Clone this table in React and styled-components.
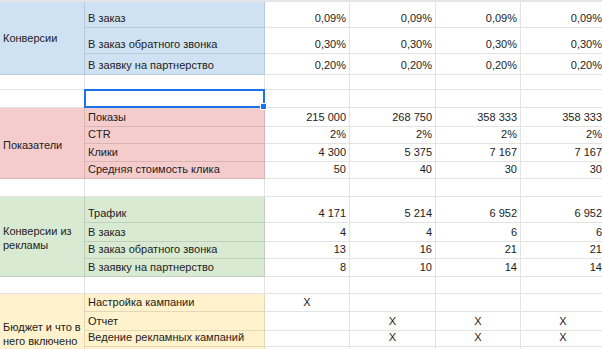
import React from 'react';
import styled, { createGlobalStyle } from 'styled-components';

const Global = createGlobalStyle`
  *, *::before, *::after { box-sizing: border-box; }
  html, body { margin: 0; padding: 0; background: #fff; overflow: hidden; }
  body { font-family: "Liberation Sans", Arial, sans-serif; }
`;

const LINE = 'rgba(0,0,0,0.11)';
const BLUE = '#cfe2f3';
const PINK = '#f4cccc';
const GREEN = '#d9ead3';
const YELLOW = '#fff2cc';

const Frame = styled.div`
  width: 602px;
  height: 349px;
  overflow: hidden;
`;

const Sheet = styled.div`
  display: grid;
  grid-template-columns: 85px 180px 85px 86px 85px 85px;
  grid-template-rows: ${(p) => p.$rows};
  width: 606px;
  border-top: 2px solid #e3e4e8;
  font-size: 11px;
  line-height: 13px;
  color: #222;
`;

const Cell = styled.div`
  position: relative;
  display: flex;
  align-items: flex-end;
  justify-content: ${(p) =>
    p.$align === 'right' ? 'flex-end' : p.$align === 'center' ? 'center' : 'flex-start'};
  padding: 0 3px 2px;
  background: ${(p) => p.$bg || '#fff'};
  border-right: 1px solid ${LINE};
  border-bottom: 1px solid ${LINE};
  white-space: nowrap;
  min-width: 0;
`;

const GroupLabel = styled(Cell)`
  grid-row: span ${(p) => p.$span};
  align-items: center;
  padding: ${(p) => p.$shift}px 3px 0;
  line-height: 14px;
`;

const Selection = styled.div`
  position: absolute;
  top: -1px;
  left: -1px;
  right: -1px;
  bottom: -1px;
  border: 2px solid #1a73e8;
  z-index: 2;
  pointer-events: none;
`;

const Handle = styled.div`
  position: absolute;
  right: -4px;
  bottom: -4px;
  width: 7px;
  height: 7px;
  background: #1a73e8;
  border: 1px solid #fff;
`;

const sections = [
  {
    type: 'group',
    label: ['Конверсии'],
    bg: BLUE,
    shift: 0,
    rows: [
      { h: 26, name: 'В заказ', v: ['0,09%', '0,09%', '0,09%', '0,09%'] },
      { h: 26, name: 'В заказ обратного звонка', v: ['0,30%', '0,30%', '0,30%', '0,30%'] },
      { h: 21, name: 'В заявку на партнерство', v: ['0,20%', '0,20%', '0,20%', '0,20%'] },
    ],
  },
  { type: 'empty', h: 15 },
  { type: 'empty', h: 18, selected: true },
  {
    type: 'group',
    label: ['Показатели'],
    bg: PINK,
    shift: 3,
    rows: [
      { h: 19, name: 'Показы', v: ['215 000', '268 750', '358 333', '358 333'] },
      { h: 17, name: 'CTR', v: ['2%', '2%', '2%', '2%'] },
      { h: 18, name: 'Клики', v: ['4 300', '5 375', '7 167', '7 167'] },
      { h: 17, name: 'Средняя стоимость клика', v: ['50', '40', '30', '30'] },
    ],
  },
  { type: 'empty', h: 18 },
  {
    type: 'group',
    label: ['Конверсии из', 'рекламы'],
    bg: GREEN,
    shift: 2,
    rows: [
      { h: 26, name: 'Трафик', v: ['4 171', '5 214', '6 952', '6 952'] },
      { h: 19, name: 'В заказ', v: ['4', '4', '6', '6'] },
      { h: 17, name: 'В заказ обратного звонка', v: ['13', '16', '21', '21'] },
      { h: 18, name: 'В заявку на партнерство', v: ['8', '10', '14', '14'] },
    ],
  },
  { type: 'empty', h: 17 },
  {
    type: 'group',
    label: ['Бюджет и что в', 'него включено'],
    bg: YELLOW,
    shift: 0,
    center: true,
    rows: [
      { h: 18, name: 'Настройка кампании', v: ['X', '', '', ''] },
      { h: 19, name: 'Отчет', v: ['', 'X', 'X', 'X'] },
      { h: 16, name: 'Ведение рекламных кампаний', v: ['', 'X', 'X', 'X'] },
      { h: 27, name: '', v: ['', '', '', ''] },
    ],
  },
];

const heights = [];
sections.forEach((s) => {
  if (s.type === 'group') s.rows.forEach((r) => heights.push(r.h));
  else heights.push(s.h);
});

export default function App() {
  const cells = [];
  sections.forEach((s, si) => {
    if (s.type === 'empty') {
      for (let c = 0; c < 6; c++) {
        cells.push(
          <Cell key={`e${si}-${c}`}>
            {s.selected && c === 1 && (
              <Selection>
                <Handle />
              </Selection>
            )}
          </Cell>
        );
      }
      return;
    }
    s.rows.forEach((r, ri) => {
      if (ri === 0) {
        cells.push(
          <GroupLabel key={`l${si}`} $bg={s.bg} $span={s.rows.length} $shift={s.shift}>
            <span>
              {s.label.map((line, li) => (
                <React.Fragment key={li}>
                  {li > 0 && <br />}
                  {line}
                </React.Fragment>
              ))}
            </span>
          </GroupLabel>
        );
      }
      cells.push(
        <Cell key={`n${si}-${ri}`} $bg={s.bg}>
          {r.name}
        </Cell>
      );
      r.v.forEach((val, vi) => {
        cells.push(
          <Cell key={`v${si}-${ri}-${vi}`} $align={s.center ? 'center' : 'right'}>
            {val}
          </Cell>
        );
      });
    });
  });

  return (
    <>
      <Global />
      <Frame>
        <Sheet $rows={heights.map((h) => `${h}px`).join(' ')}>{cells}</Sheet>
      </Frame>
    </>
  );
}
